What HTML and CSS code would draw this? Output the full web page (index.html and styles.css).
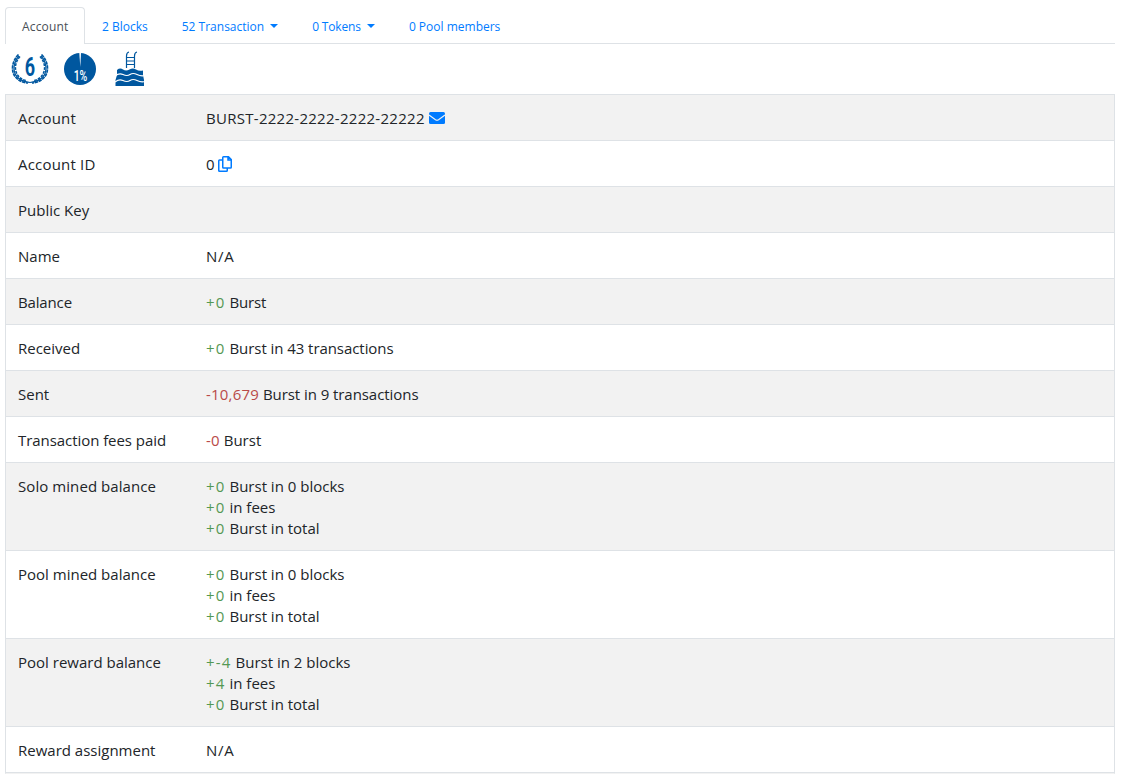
FILE: index.html
```html
<!DOCTYPE html>
<html lang="en">
<head>
<meta charset="utf-8">
<title>Account</title>
<link rel="stylesheet" href="styles.css">
</head>
<body>
<nav class="tabs">
  <a class="tab active"><span>Account</span></a>
  <a class="tab"><span>2 Blocks</span></a>
  <a class="tab"><span>52 Transaction</span><i class="caret"></i></a>
  <a class="tab"><span class="tight">0 Tokens</span><i class="caret"></i></a>
  <a class="tab"><span>0 Pool members</span></a>
</nav>
<div class="badges">
  <svg class="laurel" width="38" height="34" viewBox="0 0 38 34">
    <defs>
      <g id="branch" fill="none" stroke="#00579f">
        <path d="M7.500 2.500C1 9 -.5 19 4.500 25Q9 30.500 17 31" stroke-width="1.700" stroke-dasharray="3.400 .7"/>
        <path d="M9 4.500C4 10 2.800 18 7 23.500Q10.500 28 16 28.800" stroke-width="1.500" stroke-dasharray="2.800 1.100"/>
        <path d="M8 4C2.500 10 1.300 19 5.800 24.500Q10 29.500 19 30.500" stroke-width="1.200"/>
      </g>
    </defs>
    <use href="#branch"/>
    <use href="#branch" transform="translate(38 0) scale(-1 1)"/>
    <text class="six" transform="translate(19 24) scale(.72 1)" text-anchor="middle">6</text>
  </svg>
  <svg class="pie" width="32" height="32" viewBox="0 0 32 32">
    <circle cx="16" cy="16" r="16" fill="#00579f"/>
    <path d="M15.300 0H17L16.300 14Z" fill="#fff"/>
    <text class="pct" transform="translate(16.500 28) scale(.7 1)" text-anchor="middle">1%</text>
  </svg>
  <svg class="pool" width="30" height="36" viewBox="0 0 30 36">
    <path d="M11.500 17V5Q11.500 1.500 14 1M19.500 17V5Q19.500 1.500 22 1M11.500 6.500H19.500M11.500 10H19.500M11.500 13.500H19.500" fill="none" stroke="#00579f" stroke-width="1.200"/>
    <path d="M2 19Q5 16.500 8 18.500T14.500 18.500T21 18.500T28 19.500V24L29 29V35H.5V29L2 24Z" fill="#00579f"/>
    <path d="M0 25Q4 21.500 8 23.500T15 23.500T22 23.500T30 24.500M0 31Q4 27.500 8 29.500T15 29.500T22 29.500T30 30.500" fill="none" stroke="#fff" stroke-width="1.200"/>
  </svg>
</div>
<table class="info">
  <tr><th class="wide">Account</th><td><span class="address">BURST-2222-2222-2222-22222</span> <svg class="mail" width="16" height="12" viewBox="0 0 16 12"><rect width="16" height="12" rx="1.500" fill="#007bff"/><path d="M0 3L6.500 7.800Q8 8.800 9.500 7.800L16 3" fill="none" stroke="#f2f2f2" stroke-width="1.100"/></svg></td></tr>
  <tr><th class="wide">Account ID</th><td>0 <svg class="copy" width="14" height="16" viewBox="0 0 14 16"><path d="M5.500 .75H10.500L13.250 3.500V11.250Q13.250 12 12.500 12H5.500Q4.750 12 4.750 11.250V1.500Q4.750 .75 5.500 .75ZM10 1V4H13M4.500 4H1.500Q.75 4 .75 4.750V14.500Q.75 15.250 1.500 15.250H8.500Q9.250 15.250 9.250 14.500V12" fill="none" stroke="#007bff" stroke-width="1.500"/></svg></td></tr>
  <tr><th>Public Key</th><td></td></tr>
  <tr><th>Name</th><td class="na">N/A</td></tr>
  <tr><th class="tight">Balance</th><td><b class="plus">+0</b> <span class="tight">Burst</span></td></tr>
  <tr><th>Received</th><td><b class="plus">+0</b> <span class="snug">Burst in 43 transactions</span></td></tr>
  <tr><th>Sent</th><td><b class="minus">-10,679</b> <span class="snug">Burst in 9 transactions</span></td></tr>
  <tr><th class="snug">Transaction fees paid</th><td><b class="minus">-0</b> Burst</td></tr>
  <tr><th class="loose">Solo mined balance</th><td><b class="plus">+0</b> Burst in 0 blocks<br><b class="plus">+0</b> in fees<br><b class="plus">+0</b> Burst in total</td></tr>
  <tr><th>Pool mined balance</th><td><b class="plus">+0</b> Burst in 0 blocks<br><b class="plus">+0</b> in fees<br><b class="plus">+0</b> Burst in total</td></tr>
  <tr><th>Pool reward balance</th><td><b class="plus">+-4</b> Burst in 2 blocks<br><b class="plus">+4</b> in fees<br><b class="plus">+0</b> Burst in total</td></tr>
  <tr><th>Reward assignment</th><td class="na">N/A</td></tr>
</table>
</body>
</html>
```
FILE: styles.css
```css
body {
  margin: 0;
  height: 774px;
  overflow: hidden;
  box-sizing: border-box;
  padding: 7px 7px 0 5px;
  background: #fff;
  color: #212529;
  font: 15px/21px "Open Sans", "Noto Sans", sans-serif;
}
.tabs {
  display: flex;
  height: 36px;
  margin-bottom: 1px;
  box-shadow: 0 1px #dee2e6;
  font-size: 12px;
  color: #007bff;
}
.tab {
  box-sizing: border-box;
  height: 37px;
  padding: 9px 16px 0;
  border: 1px solid transparent;
  border-bottom: 0;
  display: flex;
  line-height: 19px;
  white-space: nowrap;
}
.tab.active {
  width: 80px;
  letter-spacing: .15px;
  color: #495057;
  background: #fff;
  border-color: #dee2e6;
  border-radius: 4px 4px 0 0;
}
.caret {
  margin: 7px 0 0 6px;
  width: 0;
  height: 0;
  border: 4px solid transparent;
  border-top-color: #007bff;
  border-bottom: 0;
}
.badges {
  display: flex;
  align-items: flex-start;
  height: 50px;
  box-sizing: border-box;
  padding-left: 6px;
}
.laurel { margin-top: 8px; }
.pie { margin: 9px 0 0 15px; }
.pool { margin: 7px 0 0 19px; }
.six { font: bold 25px "Roboto", sans-serif; fill: #00579f; }
.pct { font: 500 15px "Roboto", sans-serif; fill: #fff; }
.info {
  width: 1110px;
  table-layout: fixed;
  border-spacing: 0;
  border: 1px solid #dee2e6;
  border-bottom-color: #f2f2f2;
}
.info th, .info td {
  padding: 13px 12px 11px 0;
  height: 21px;
  border-bottom: 1px solid #dee2e6;
  text-align: left;
  vertical-align: top;
  font-weight: 400;
  white-space: nowrap;
}
.info th { width: 176px; padding-left: 12px; }
.info tr:nth-child(odd) { background: #f2f2f2; }
.info b { font-weight: 400; }
.info .plus { color: #549853; letter-spacing: 1.200px; }
.info .minus { color: #b94a48; letter-spacing: .2px; }
.wide { letter-spacing: .2px; }
.tight { letter-spacing: -.15px; }
.snug { letter-spacing: -.06px; }
.loose { letter-spacing: .07px; }
.address { letter-spacing: .28px; }
.na { letter-spacing: .7px; }
.mail { vertical-align: 0; }
.copy { vertical-align: -2px; }
```
